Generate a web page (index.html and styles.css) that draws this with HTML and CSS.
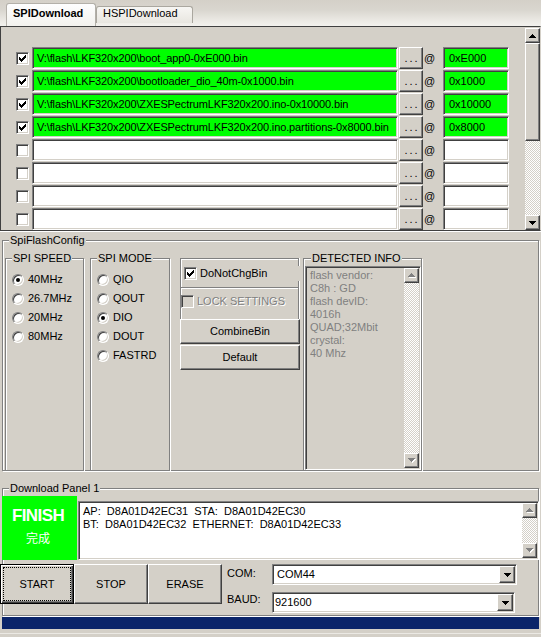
FILE: index.html
```html
<!DOCTYPE html>
<html>
<head>
<meta charset="utf-8">
<title>SPIDownload</title>
<link rel="stylesheet" href="styles.css">
</head>
<body>
<div class="app">
  <div class="tabbar">
    <div class="tab tab-active">SPIDownload</div>
    <div class="tab">HSPIDownload</div>
  </div>

  <div class="filelist">
    <div class="rows">
      <div class="row">
        <span class="chk"><svg class="tick" width="7" height="7" viewBox="0 0 7 7" shape-rendering="crispEdges"><path d="M0 2h1v3H0zM1 3h1v3H1zM2 4h1v3H2zM3 3h1v3H3zM4 2h1v3H4zM5 1h1v3H5zM6 0h1v3H6z"/></svg></span>
        <div class="field path on">V:\flash\LKF320x200\boot_app0-0xE000.bin</div>
        <div class="btn browse">...</div>
        <span class="at">@</span>
        <div class="field addr on">0xE000</div>
      </div>
      <div class="row">
        <span class="chk"><svg class="tick" width="7" height="7" viewBox="0 0 7 7" shape-rendering="crispEdges"><path d="M0 2h1v3H0zM1 3h1v3H1zM2 4h1v3H2zM3 3h1v3H3zM4 2h1v3H4zM5 1h1v3H5zM6 0h1v3H6z"/></svg></span>
        <div class="field path on">V:\flash\LKF320x200\bootloader_dio_40m-0x1000.bin</div>
        <div class="btn browse">...</div>
        <span class="at">@</span>
        <div class="field addr on">0x1000</div>
      </div>
      <div class="row">
        <span class="chk"><svg class="tick" width="7" height="7" viewBox="0 0 7 7" shape-rendering="crispEdges"><path d="M0 2h1v3H0zM1 3h1v3H1zM2 4h1v3H2zM3 3h1v3H3zM4 2h1v3H4zM5 1h1v3H5zM6 0h1v3H6z"/></svg></span>
        <div class="field path on">V:\flash\LKF320x200\ZXESPectrumLKF320x200.ino-0x10000.bin</div>
        <div class="btn browse">...</div>
        <span class="at">@</span>
        <div class="field addr on">0x10000</div>
      </div>
      <div class="row">
        <span class="chk"><svg class="tick" width="7" height="7" viewBox="0 0 7 7" shape-rendering="crispEdges"><path d="M0 2h1v3H0zM1 3h1v3H1zM2 4h1v3H2zM3 3h1v3H3zM4 2h1v3H4zM5 1h1v3H5zM6 0h1v3H6z"/></svg></span>
        <div class="field path on">V:\flash\LKF320x200\ZXESPectrumLKF320x200.ino.partitions-0x8000.bin</div>
        <div class="btn browse">...</div>
        <span class="at">@</span>
        <div class="field addr on">0x8000</div>
      </div>
      <div class="row">
        <span class="chk"></span>
        <div class="field path"></div>
        <div class="btn browse">...</div>
        <span class="at">@</span>
        <div class="field addr"></div>
      </div>
      <div class="row">
        <span class="chk"></span>
        <div class="field path"></div>
        <div class="btn browse">...</div>
        <span class="at">@</span>
        <div class="field addr"></div>
      </div>
      <div class="row">
        <span class="chk"></span>
        <div class="field path"></div>
        <div class="btn browse">...</div>
        <span class="at">@</span>
        <div class="field addr"></div>
      </div>
      <div class="row">
        <span class="chk"></span>
        <div class="field path"></div>
        <div class="btn browse">...</div>
        <span class="at">@</span>
        <div class="field addr"></div>
      </div>
    </div>
    <div class="vscroll">
      <div class="btn sbtn"><svg width="7" height="4" viewBox="0 0 7 4" shape-rendering="crispEdges"><path d="M3 0h1v1h1v1h1v1h1v1H0V3h1V2h1V1h1z"/></svg></div>
      <div class="btn thumb"></div>
      <div class="track"></div>
      <div class="btn sbtn"><svg width="7" height="4" viewBox="0 0 7 4" shape-rendering="crispEdges"><path d="M0 0h7v1H6v1H5v1H4v1H3V3H2V2H1V1H0z"/></svg></div>
    </div>
  </div>

  <div class="group spicfg">
    <div class="legend">SpiFlashConfig</div>
    <div class="cfg-row">
      <div class="group speed">
        <div class="legend">SPI SPEED</div>
        <div class="radios">
          <div class="radio-row"><span class="radio sel"></span>40MHz</div>
          <div class="radio-row"><span class="radio"></span>26.7MHz</div>
          <div class="radio-row"><span class="radio"></span>20MHz</div>
          <div class="radio-row"><span class="radio"></span>80MHz</div>
        </div>
      </div>
      <div class="group mode">
        <div class="legend">SPI MODE</div>
        <div class="radios">
          <div class="radio-row"><span class="radio"></span>QIO</div>
          <div class="radio-row"><span class="radio"></span>QOUT</div>
          <div class="radio-row"><span class="radio sel"></span>DIO</div>
          <div class="radio-row"><span class="radio"></span>DOUT</div>
          <div class="radio-row"><span class="radio"></span>FASTRD</div>
        </div>
      </div>
      <div class="optcol">
        <div class="optbox box1">
          <div class="chkrow chkrow1">
            <span class="chk"><svg class="tick" width="7" height="7" viewBox="0 0 7 7" shape-rendering="crispEdges"><path d="M0 2h1v3H0zM1 3h1v3H1zM2 4h1v3H2zM3 3h1v3H3zM4 2h1v3H4zM5 1h1v3H5zM6 0h1v3H6z"/></svg></span>
            <span class="chklabel">DoNotChgBin</span>
          </div>
        </div>
        <div class="optbox box2">
          <div class="chkrow chkrow2">
            <span class="chk chk-disabled"></span>
            <span class="chklabel disabled">LOCK SETTINGS</span>
          </div>
        </div>
        <div class="btn cmd">CombineBin</div>
        <div class="btn cmd cmd2">Default</div>
      </div>
      <div class="group detected">
        <div class="legend legend-det">DETECTED INFO</div>
        <div class="infobox">
          <div class="infotext">flash vendor:<br>C8h : GD<br>flash devID:<br>4016h<br>QUAD;32Mbit<br>crystal:<br>40 Mhz</div>
          <div class="vscroll2">
            <div class="btn sbtn"><svg width="8" height="5" viewBox="0 0 8 5" shape-rendering="crispEdges"><path fill="#fff" transform="translate(1 1)" d="M3 0h1v1h1v1h1v1h1v1H0V3h1V2h1V1h1z"/><path fill="#808080" d="M3 0h1v1h1v1h1v1h1v1H0V3h1V2h1V1h1z"/></svg></div>
            <div class="track"></div>
            <div class="btn sbtn"><svg width="8" height="5" viewBox="0 0 8 5" shape-rendering="crispEdges"><path fill="#fff" transform="translate(1 1)" d="M0 0h7v1H6v1H5v1H4v1H3V3H2V2H1V1H0z"/><path fill="#808080" d="M0 0h7v1H6v1H5v1H4v1H3V3H2V2H1V1H0z"/></svg></div>
          </div>
        </div>
      </div>
    </div>
  </div>

  <div class="group dlpanel">
    <div class="legend">Download Panel 1</div>
    <div class="dl-top">
      <div class="finish">
        <div class="finish-en">FINISH</div>
        <div class="finish-cn">完成</div>
      </div>
      <div class="log">
        <div class="logtext">AP:  D8A01D42EC31  STA:  D8A01D42EC30
BT:  D8A01D42EC32  ETHERNET:  D8A01D42EC33</div>
        <div class="vscroll2">
          <div class="btn sbtn"><svg width="8" height="5" viewBox="0 0 8 5" shape-rendering="crispEdges"><path fill="#fff" transform="translate(1 1)" d="M3 0h1v1h1v1h1v1h1v1H0V3h1V2h1V1h1z"/><path fill="#808080" d="M3 0h1v1h1v1h1v1h1v1H0V3h1V2h1V1h1z"/></svg></div>
          <div class="track"></div>
          <div class="btn sbtn"><svg width="8" height="5" viewBox="0 0 8 5" shape-rendering="crispEdges"><path fill="#fff" transform="translate(1 1)" d="M0 0h7v1H6v1H5v1H4v1H3V3H2V2H1V1H0z"/><path fill="#808080" d="M0 0h7v1H6v1H5v1H4v1H3V3H2V2H1V1H0z"/></svg></div>
        </div>
      </div>
    </div>
    <div class="dl-bottom">
      <div class="btn bigbtn focus">START</div>
      <div class="btn bigbtn">STOP</div>
      <div class="btn bigbtn">ERASE</div>
      <div class="ports">
        <div class="plabel lbl-com">COM:</div>
        <div class="combo com">
          <div class="combo-text">COM44</div>
          <div class="btn ddbtn"><svg width="7" height="4" viewBox="0 0 7 4" shape-rendering="crispEdges"><path d="M0 0h7v1H6v1H5v1H4v1H3V3H2V2H1V1H0z"/></svg></div>
        </div>
        <div class="plabel lbl-baud">BAUD:</div>
        <div class="combo baud">
          <div class="combo-text baud-text">921600</div>
          <div class="btn ddbtn"><svg width="7" height="4" viewBox="0 0 7 4" shape-rendering="crispEdges"><path d="M0 0h7v1H6v1H5v1H4v1H3V3H2V2H1V1H0z"/></svg></div>
        </div>
      </div>
    </div>
  </div>

  <div class="progress"></div>
  <div class="footline"></div>
</div>
</body>
</html>
```

FILE: styles.css
```css
* { box-sizing: border-box; }
html, body { margin: 0; padding: 0; }
body {
  background: #d4d0c8;
  font-family: "Liberation Sans", Arial, sans-serif;
  font-size: 11px;
  line-height: 13px;
  color: #000;
}
.app { width: 541px; height: 637px; overflow: hidden; }

/* tabs */
.tabbar {
  height: 26px;
  display: flex;
  align-items: flex-start;
  padding-left: 6px;
  background: linear-gradient(#d4d0c8 0, #d9d6cf 10px, #eceae5 21px, #f3f2ee 26px);
}
.tab {
  margin-top: 6px;
  height: 17px;
  width: 97px;
  padding: 0 0 0 6px;
  border: 1px solid #aaa79f;
  border-bottom: none;
  border-radius: 3px 3px 0 0;
  background: linear-gradient(#f7f6f3, #e8e6e0);
  white-space: nowrap;
}
.tab-active {
  margin-top: 3px;
  height: 23px;
  width: 90px;
  padding: 3px 0 0 6px;
  font-weight: bold;
  background: linear-gradient(#fefefe, #f3f2ee);
  border-color: #b3b0a9;
}

/* common 3D */
.btn {
  background: #d4d0c8;
  border: 1px solid;
  border-color: #fff #404040 #404040 #fff;
  box-shadow: inset -1px -1px #808080;
  display: flex;
  align-items: center;
  justify-content: center;
  flex: none;
}
.field, .chk, .radio, .infobox, .log, .combo {
  border: 1px solid;
  border-color: #808080 #fff #fff #808080;
  box-shadow: inset 1px 1px #404040, inset -1px -1px #d4d0c8;
}
.group {
  border: 1px solid #808080;
  box-shadow: inset 1px 1px #fff, 1px 1px #fff;
  flex: none;
}
.legend {
  display: table;
  margin: -7px 0 0 6px;
  padding: 0 1px;
  background: #d4d0c8;
  line-height: 13px;
  white-space: nowrap;
}

/* file list */
.filelist {
  display: flex;
  height: 205px;
  border: 1px solid #404040;
  border-right-color: #d4d0c8;
  box-shadow: 0 1px 0 #fff;
}
.rows { width: 524px; flex: none; padding: 20px 0 0 15px; }
.row { display: flex; align-items: center; height: 22px; margin-bottom: 1px; }
.chk {
  width: 13px;
  height: 13px;
  background: #fff;
  display: flex;
  align-items: center;
  justify-content: center;
  flex: none;
}
.tick { display: block; }
.field {
  height: 22px;
  background: #fff;
  white-space: nowrap;
  overflow: hidden;
  line-height: 20px;
  flex: none;
}
.path { width: 366px; margin-left: 3px; padding-left: 4px; letter-spacing: -0.12px; }
.addr { width: 66px; padding-left: 5px; }
.on { background: #00ff00; }
.browse { width: 24px; height: 22px; margin-left: 1px; letter-spacing: 2px; padding-left: 2px; }
.at { width: 19px; margin-left: 1px; flex: none; }

.vscroll { width: 15px; margin-top: 1px; display: flex; flex-direction: column; flex: none; }
.sbtn { width: 15px; height: 15px; }
.sbtn svg { display: block; }
.thumb { width: 15px; height: 98px; }
.track {
  flex: 1;
  background: repeating-conic-gradient(#fff 0 25%, #d4d0c8 0 50%) 0 0 / 2px 2px;
}

/* SpiFlashConfig */
.spicfg { margin: 9px 0 0 2px; width: 537px; height: 231px; }
.cfg-row { display: flex; margin-top: 11px; padding-left: 2px; }
.speed { width: 79px; height: 213px; }
.mode { width: 80px; height: 213px; margin-left: 6px; }
.radios { padding-top: 5px; }
.radio-row { height: 19px; display: flex; align-items: center; padding-left: 6px; white-space: nowrap; }
.radio {
  width: 12px;
  height: 12px;
  border-radius: 50%;
  background: #fff;
  margin-right: 4px;
  display: flex;
  align-items: center;
  justify-content: center;
  flex: none;
}
.radio.sel::after {
  content: "";
  width: 4px;
  height: 4px;
  border-radius: 50%;
  background: #000;
}

.optcol { width: 120px; margin-left: 10px; flex: none; }
.optbox {
  width: 119px;
  border: 1px solid #808080;
  border-bottom: none;
  box-shadow: inset 1px 1px #fff, 1px 0 #fff;
}
.box1 { height: 29px; }
.box2 { height: 32px; }
.chkrow { display: flex; align-items: center; height: 15px; white-space: nowrap; }
.chkrow1 { margin: 7px -2px 0 3px; background: #d4d0c8; }
.chkrow2 { margin: 6px 0 0 0; }
.chklabel { margin-left: 3px; }
.chk-disabled { background: #d4d0c8; }
.disabled { color: #808080; text-shadow: 1px 1px 0 #fff; }
.cmd { width: 120px; height: 25px; }
.cmd2 { margin-top: 1px; }

.detected { width: 119px; height: 213px; margin-left: 3px; }
.legend-det { margin-left: 7px; }
.infobox {
  margin: 1px 0 0 1px;
  width: 116px;
  height: 204px;
  padding: 1px;
  display: flex;
  background: #d4d0c8;
}
.infotext { flex: 1; padding: 1px 0 0 3px; color: #808080; white-space: nowrap; overflow: hidden; }
.vscroll2 { width: 15px; display: flex; flex-direction: column; flex: none; }

/* download panel */
.dlpanel { margin: 17px 0 0 2px; width: 537px; height: 128px; }
.dl-top { display: flex; align-items: flex-start; margin-top: 1px; }
.finish {
  margin-left: -1px;
  width: 75px;
  height: 64px;
  background: #00ff00;
  color: #fff;
  display: flex;
  flex-direction: column;
  align-items: center;
  padding: 10px 3px 0 0;
  flex: none;
}
.finish-en { font-size: 17px; font-weight: bold; line-height: 20px; letter-spacing: -0.6px; }
.finish-cn {
  font-family: "Noto Sans CJK SC", "Noto Sans CJK JP", sans-serif;
  font-size: 12px;
  line-height: 16px;
  margin-top: 4px;
}
.log {
  margin: 5px 0 0 1px;
  width: 461px;
  height: 59px;
  padding: 1px;
  display: flex;
  background: #fff;
  flex: none;
}
.logtext { flex: 1; padding: 2px 0 0 3px; white-space: pre; overflow: hidden; }

.dl-bottom { display: flex; margin: 4px 0 0 -3px; }
.bigbtn { width: 74px; height: 40px; }
.focus {
  border-color: #000;
  box-shadow: inset 1px 1px #fff, inset -1px -1px #404040, inset -2px -2px #808080;
  outline: 1px dotted #000;
  outline-offset: -4px;
}
.ports {
  display: grid;
  grid-template-columns: 45px auto;
  grid-template-rows: 21px 21px;
  row-gap: 7px;
  margin-left: 5px;
}
.lbl-com { padding-top: 3px; }
.lbl-baud { padding-top: 1px; }
.combo {
  height: 21px;
  padding: 1px;
  display: flex;
  align-items: center;
  background: #fff;
}
.com { width: 245px; }
.baud { width: 243px; }
.combo-text { flex: 1; padding-left: 3px; }
.baud-text { padding-left: 1px; }
.ddbtn { width: 16px; height: 17px; }
.ddbtn svg { display: block; }

.progress { margin: 1px 0 0 2px; width: 537px; height: 12px; background: #0a246a; }
.footline { margin-top: 4px; height: 1px; background: #ebe9e4; }
```
